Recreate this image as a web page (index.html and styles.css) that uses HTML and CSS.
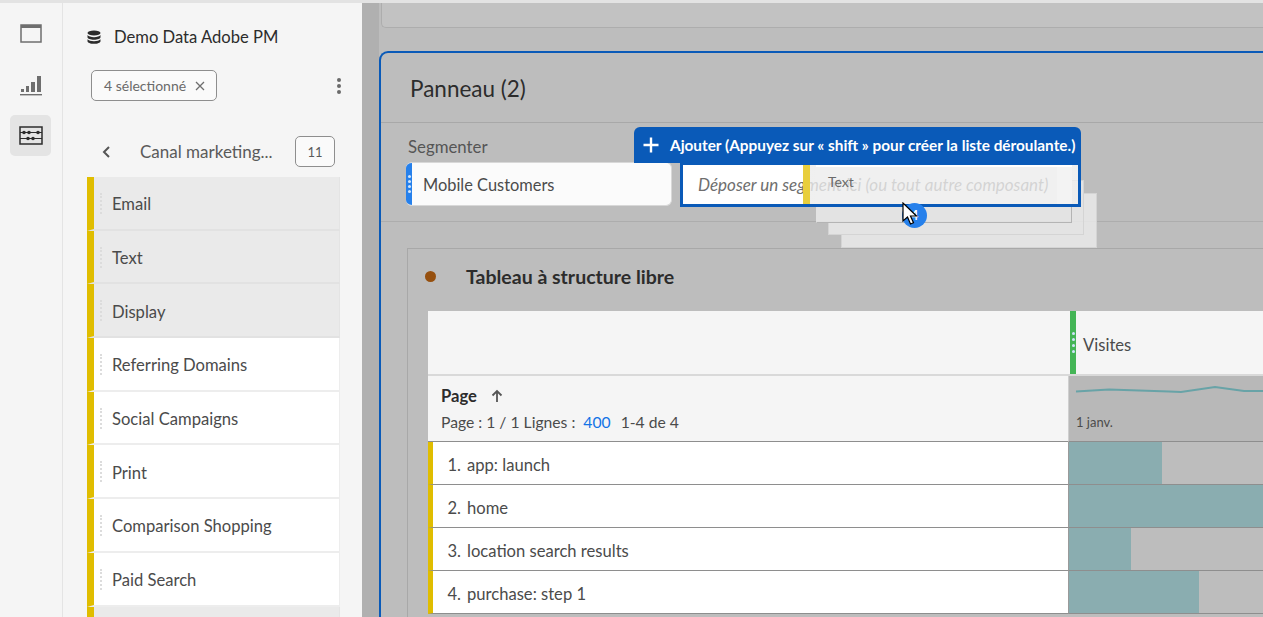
FILE: index.html
```html
<!DOCTYPE html>
<html lang="fr">
<head>
<meta charset="utf-8">
<title>Panneau</title>
<link rel="stylesheet" href="styles.css">
</head>
<body>
<div class="topstrip"></div>
<div class="app">
  <nav class="rail">
    <button class="rail-btn"><svg width="22" height="19" viewBox="0 0 22 19"><rect x="1" y="1" width="20" height="17" fill="none" stroke="#6e6e6e" stroke-width="1.5"/><rect x="1" y="1" width="20" height="3" fill="#6e6e6e"/></svg></button>
    <button class="rail-btn"><svg width="24" height="22" viewBox="0 0 24 22"><g fill="#6e6e6e"><rect x="1" y="20" width="22" height="1.4"/><rect x="2" y="15" width="3" height="3"/><rect x="7" y="12" width="3" height="6"/><rect x="12" y="8" width="4" height="10"/><rect x="18" y="2" width="4" height="16"/></g></svg></button>
    <button class="rail-btn active"><svg width="24" height="19" viewBox="0 0 24 19"><rect x="1" y="1" width="22" height="17" fill="none" stroke="#2c2c2c" stroke-width="1.5"/><path d="M1 6.5h22M1 12.5h22" stroke="#2c2c2c" stroke-width="1"/><g fill="#2c2c2c"><circle cx="5" cy="6.5" r="1.8"/><circle cx="10" cy="6.5" r="1.8"/><circle cx="19" cy="6.5" r="1.8"/><circle cx="9" cy="12.5" r="1.8"/><circle cx="14" cy="12.5" r="1.8"/></g></svg></button>
  </nav>

  <aside class="sidebar">
    <div class="suite">
      <svg width="14" height="14" viewBox="0 0 14 14"><g fill="#2c2c2c"><ellipse cx="7" cy="3" rx="6.5" ry="2.6"/><path d="M.5 5c1 1.400 3.500 2.200 6.500 2.200S12.500 6.400 13.500 5v2.200c0 1.400-3 2.500-6.500 2.500S.5 8.600.5 7.200z"/><path d="M.5 9.300c1 1.300 3.500 2 6.500 2s5.500-.7 6.500-2v1.900c0 1.500-3 2.600-6.500 2.600S.5 12.700.5 11.200z"/></g></svg>
      <span>Demo Data Adobe PM</span>
    </div>
    <div class="filter-row">
      <div class="tag">4 sélectionné <svg class="tag-x" width="10" height="10" viewBox="0 0 10 10"><path d="M1 1l8 8M9 1L1 9" stroke="#6e6e6e" stroke-width="1.300"/></svg></div>
      <div class="kebab"><i></i><i></i><i></i></div>
    </div>
    <div class="crumb">
      <svg width="10" height="14" viewBox="0 0 10 14"><path d="M8 2L3 7l5 5" fill="none" stroke="#555" stroke-width="2"/></svg>
      <span class="crumb-name">Canal marketing...</span>
      <span class="count">11</span>
    </div>
    <ul class="list">
      <li class="item hl"><span class="grip"></span>Email</li>
      <li class="item hl"><span class="grip"></span>Text</li>
      <li class="item hl"><span class="grip"></span>Display</li>
      <li class="item"><span class="grip"></span>Referring Domains</li>
      <li class="item"><span class="grip"></span>Social Campaigns</li>
      <li class="item"><span class="grip"></span>Print</li>
      <li class="item"><span class="grip"></span>Comparison Shopping</li>
      <li class="item"><span class="grip"></span>Paid Search</li>
      <li class="item hl"></li>
    </ul>
  </aside>

  <main class="main">
    <div class="prev-card"></div>
    <section class="panel">
      <h1 class="panel-title">Panneau (2)</h1>
      <div class="segment-zone">
        <div class="seg-label">Segmenter</div>
        <div class="seg-row">
          <div class="seg-chip"><span class="seg-grip"><i></i><i></i><i></i><i></i></span>Mobile Customers</div>
          <div class="seg-drop">Déposer un segment ici (ou tout autre composant)</div>
        </div>
      </div>
      <section class="viz">
        <div class="viz-head"><span class="dot"></span>Tableau à structure libre</div>
        <div class="table">
          <div class="corner"></div>
          <div class="metric-head"><span class="metric-grip"><i></i><i></i><i></i><i></i></span>Visites</div>
          <div class="dim-head">
            <div class="dim-title">Page <svg width="12" height="14" viewBox="0 0 12 14"><path d="M6 13V2M1.500 6.500L6 2l4.500 4.500" fill="none" stroke="#555" stroke-width="1.800"/></svg></div>
            <div class="dim-info">Page : 1 / 1 Lignes : <b>400</b> 1-4 de 4</div>
          </div>
          <div class="spark">
            <svg class="spark-line" width="195" height="20" viewBox="0 0 195 20"><path d="M7 7.500L40 5.500 100 7.500 112 8 146 3 175 7 195 7" fill="none" stroke="#68a3a7" stroke-width="2"/></svg>
            <span class="spark-date">1 janv.</span>
          </div>
          <div class="row-name"><span class="num">1.</span>app: launch</div>
          <div class="row-val"><div class="bar b1"></div></div>
          <div class="row-name"><span class="num">2.</span>home</div>
          <div class="row-val"><div class="bar b2"></div></div>
          <div class="row-name"><span class="num">3.</span>location search results</div>
          <div class="row-val"><div class="bar b3"></div></div>
          <div class="row-name"><span class="num">4.</span>purchase: step 1</div>
          <div class="row-val"><div class="bar b4"></div></div>
        </div>
      </section>
    </section>
  </main>
</div>

<div class="ghost g3"></div>
<div class="ghost g2"></div>
<div class="ghost g1"></div>
<div class="add-tab"><svg width="18" height="18" viewBox="0 0 18 18"><path d="M9 1.500v15M1.500 9h15" stroke="#fff" stroke-width="2.400"/></svg>Ajouter (Appuyez sur « shift » pour créer la liste déroulante.)</div>
<div class="drop-frame"></div>
<div class="ghost-top"><span class="ghost-text">Text</span><span class="ghost-end"></span></div>
<div class="badge">4</div>
<svg class="cursor" width="18" height="24" viewBox="0 0 18 24"><path d="M1 1v18l4.500-4 3 7 3-1.300-3-6.700h6z" fill="#fff" stroke="#000" stroke-width="1.200"/></svg>
</body>
</html>
```
FILE: styles.css
```css
* { box-sizing: border-box; }
html, body { margin: 0; height: 617px; overflow: hidden; }
body { position: relative; background: #f5f5f5; font-family: "Lato", "Liberation Sans", sans-serif; font-size: 16.600px; color: #4b4b4b; }
.topstrip { height: 3px; background: #e3e3e3; }
.app { display: flex; height: 614px; overflow: hidden; }

.rail { width: 63px; flex: none; border-right: 1px solid #e4e4e4; display: flex; flex-direction: column; padding: 10px 0 0 10px; gap: 10px; }
.rail-btn { width: 41px; height: 41px; padding: 0; border: 0; border-radius: 5px; background: none; display: flex; align-items: center; justify-content: center; }
.rail-btn.active { background: #e4e4e4; }

.sidebar { width: 299px; flex: none; padding: 0 21px 0 24px; overflow: hidden; }
.suite { display: flex; align-items: center; gap: 13px; height: 46px; padding: 22px 0 0; color: #2c2c2c; }
.filter-row { display: flex; align-items: center; justify-content: space-between; margin: 21px 0 0 4px; }
.tag { width: 126px; height: 31px; border: 1px solid #8e8e8e; border-radius: 5px; background: #fafafa; display: flex; align-items: center; padding-left: 12px; font-size: 14px; color: #6a6a6a; white-space: nowrap; }
.tag-x { margin-left: 9px; flex: none; }
.kebab { display: flex; flex-direction: column; gap: 2px; }
.kebab i { width: 4px; height: 4px; border-radius: 50%; background: #6a6a6a; }
.crumb { display: flex; align-items: center; height: 31px; margin-top: 35px; padding-left: 14px; color: #5a5a5a; }
.crumb-name { margin-left: 29px; width: 155px; white-space: nowrap; font-size: 17px; }
.count { width: 40px; height: 31px; border: 1px solid #8e8e8e; border-radius: 5px; display: flex; align-items: center; justify-content: center; font-size: 13px; background: #fafafa; }
.list { list-style: none; margin: 10px 0 0; padding: 0; width: 253px; }
.item { position: relative; height: 53.700px; background: #fff; border-right: 1px solid #ededed; border-left: 7px solid #e0bd00; border-bottom: 2px solid #ededed; display: flex; align-items: center; padding: 3px 0 0 18px; color: #4b4b4b; }
.item.hl { background: #eaeaea; border-right-color: #e4e4e4; border-bottom-color: #e2e2e2; }
.grip { position: absolute; left: 6px; top: 16px; height: 21px; border-left: 2px dotted #dcdcdc; }

.main { flex: 1; min-width: 0; background: #bdbdbd; border-left: 17px solid #b0b0b0; overflow: hidden; position: relative; }
.prev-card { height: 25px; margin-left: 2px; background: #c2c2c2; border: 1px solid #adadad; border-top: 0; border-right: 0; border-radius: 0 0 0 5px; }
.panel { margin-top: 23px; border: 2px solid #0a5ab8; border-right: 0; border-bottom: 0; border-radius: 9px 0 0 0; background: #bdbdbd; height: 600px; }
.panel-title { margin: 0; height: 70px; padding: 23px 0 0 29px; font-size: 22.500px; line-height: 26px; font-weight: 400; color: #2c2c2c; border-bottom: 1px solid #a8a8a8; }
.segment-zone { height: 99px; padding: 12px 0 0 25px; border-bottom: 1px solid #adadad; }
.seg-label { height: 27px; line-height: 24px; font-size: 16.800px; color: #555; padding-left: 2px; }
.seg-row { display: flex; gap: 8px; }
.seg-chip { position: relative; width: 266px; height: 44px; background: #fbfbfb; border: 1px solid #d8d8d8; border-left: 0; border-radius: 6px; display: flex; align-items: center; padding: 1px 0 0 17px; overflow: hidden; color: #4b4b4b; font-size: 16.400px; }
.seg-grip { position: absolute; left: 0; top: 0; bottom: 0; width: 6px; background: #2680eb; display: flex; flex-direction: column; justify-content: center; align-items: center; gap: 2px; }
.seg-grip i, .metric-grip i { width: 3px; height: 3px; border-radius: 50%; background: #cfe4fb; }
.seg-drop { flex: none; width: 400px; height: 44px; background: #fff; padding-left: 18px; display: flex; align-items: center; font-style: italic; font-size: 17px; color: #6e6e6e; white-space: nowrap; }

.viz { margin: 26px 0 0 26px; background: #bdbdbd; border: 1px solid #a8a8a8; border-right: 0; height: 400px; }
.viz-head { display: flex; align-items: center; height: 62px; padding: 0 0 8px 17px; font-size: 19.500px; font-weight: 700; color: #2c2c2c; }
.dot { width: 11px; height: 11px; border-radius: 50%; background: #96500f; margin-right: 30px; }
.table { margin-left: 20px; display: grid; grid-template-columns: 641px 1fr; grid-auto-rows: auto; }
.corner { height: 65px; background: #f5f5f5; border-bottom: 2px solid #d9d9d9; }
.metric-head { position: relative; height: 65px; background: #f5f5f5; padding: 4px 0 0 14px; display: flex; align-items: center; border-bottom: 2px solid #d9d9d9; color: #4b4b4b; }
.metric-grip { position: absolute; left: 1px; top: 0; bottom: 0; width: 6px; background: #44b556; display: flex; flex-direction: column; justify-content: center; align-items: center; gap: 3px; }
.dim-head { height: 66px; background: #f5f5f5; border-bottom: 1px solid #8e8e8e; border-right: 1px solid #cfcfcf; padding: 8px 0 0 13px; }
.dim-title { display: flex; align-items: center; gap: 14px; font-weight: 700; color: #2c2c2c; height: 24px; }
.dim-info { margin-top: 5px; font-size: 15.700px; white-space: nowrap; }
.dim-info b { font-weight: 400; color: #1473e6; margin: 0 6px 0 4px; }
.spark { position: relative; height: 66px; background: #b8b8b8; border-bottom: 1px solid #8e8e8e; }
.spark-line { position: absolute; left: 0; top: 8px; display: block; }
.spark-date { position: absolute; left: 7px; top: 38px; font-size: 13px; color: #4b4b4b; }
.row-name { height: 43px; background: #fff; border-left: 5px solid #e0bd00; border-bottom: 1px solid #8e8e8e; display: flex; align-items: center; padding: 3px 0 0 13px; border-right: 1px solid #9a9a9a; }
.num { width: 15px; text-align: right; margin-right: 6px; flex: none; white-space: nowrap; }
.row-val { height: 43px; background: #bdbdbd; border-bottom: 1px solid #8e8e8e; }
.bar { height: 42px; background: #8aadb0; }
.b1 { width: 93px; }
.b2 { width: 100%; }
.b3 { width: 62px; }
.b4 { width: 130px; }

.ghost { position: absolute; background: rgba(236,236,236,.8); border: 1px solid #d4d4d4; }
.g3 { left: 841px; top: 193px; width: 256px; height: 55px; clip-path: polygon(243px 0, 100% 0, 100% 100%, 0 100%, 0 42px, 243px 42px); }
.g2 { left: 828px; top: 180px; width: 256px; height: 55px; clip-path: polygon(244px 0, 100% 0, 100% 100%, 0 100%, 0 43px, 244px 43px); }
.g1 { left: 816px; top: 167px; width: 256px; height: 56px; border-top: 0; border-left-color: transparent; border-right-color: #b4b4b4; border-bottom-color: #b4b4b4; }
.add-tab { position: absolute; left: 634px; top: 127px; width: 447px; height: 36px; background: #0a5ab8; border-radius: 6px 6px 0 0; color: #fff; font-size: 15.350px; font-weight: 700; display: flex; align-items: center; padding-left: 8px; gap: 10px; white-space: nowrap; }
.drop-frame { position: absolute; left: 680px; top: 163px; width: 401px; height: 44px; border: 3px solid #0a5ab8; border-top-width: 2px; pointer-events: none; }
.ghost-top { position: absolute; left: 803px; top: 165px; width: 275px; height: 39px; background: linear-gradient(to right, rgba(236,236,236,.8) 6px, transparent 6px, transparent 262px, rgba(236,236,236,.8) 262px); border-left: 7px solid #e8ce3c; padding-left: 18px; color: #6a6a6a; font-size: 14px; line-height: 33px; }
.ghost-end { position: absolute; left: 247px; top: 2px; width: 15px; height: 37px; background: #f3f3f3; }
.badge { position: absolute; left: 902px; top: 203px; width: 25px; height: 25px; border-radius: 50%; background: #2680eb; color: #fff; font-size: 13px; font-weight: 700; text-align: center; line-height: 25px; }
.cursor { position: absolute; left: 902px; top: 202px; }
```
